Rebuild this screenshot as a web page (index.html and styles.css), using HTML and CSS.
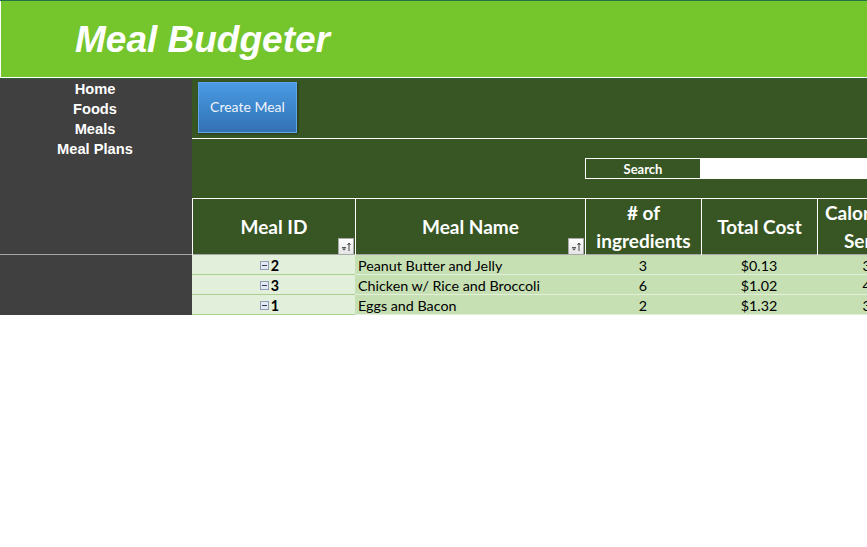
FILE: index.html
```html
<!DOCTYPE html>
<html lang="en">
<head>
<meta charset="utf-8">
<title>Meal Budgeter</title>
<link rel="stylesheet" href="styles.css">
</head>
<body>
<div class="page">
  <header class="header">
    <div class="titlebar"><h1 class="title">Meal Budgeter</h1></div>
  </header>
  <div class="layout">
    <nav class="sidebar">
      <ul class="nav">
        <li>Home</li>
        <li>Foods</li>
        <li>Meals</li>
        <li>Meal Plans</li>
      </ul>
      <div class="sidebar-foot"></div>
    </nav>
    <main class="main">
      <div class="toolbar">
        <button class="btn" type="button">Create Meal</button>
      </div>
      <div class="searchbar">
        <div class="search-label">Search</div>
        <div class="search-input"></div>
      </div>
      <div class="table">
        <div class="thead">
          <div class="th">Meal ID
            <span class="sort"><svg width="16" height="17" viewBox="0 0 16 17"><defs><linearGradient id="sg1" x1="0" y1="0" x2="0" y2="1"><stop offset="0" stop-color="#ffffff"/><stop offset="1" stop-color="#e4e4e4"/></linearGradient></defs><rect x="0.5" y="0.5" width="15" height="16" fill="url(#sg1)" stroke="#a9a9a9"/><rect x="4" y="9" width="4" height="1" fill="#555"/><path d="M4 10.5h4l-2 2z" fill="#444"/><path d="M11 5v8" stroke="#444" stroke-width="1"/><path d="M9.5 7l1.5-2l1.5 2" fill="none" stroke="#444" stroke-width="1"/></svg></span>
          </div>
          <div class="th">Meal Name
            <span class="sort"><svg width="16" height="17" viewBox="0 0 16 17"><defs><linearGradient id="sg2" x1="0" y1="0" x2="0" y2="1"><stop offset="0" stop-color="#ffffff"/><stop offset="1" stop-color="#e4e4e4"/></linearGradient></defs><rect x="0.5" y="0.5" width="15" height="16" fill="url(#sg2)" stroke="#a9a9a9"/><rect x="4" y="9" width="4" height="1" fill="#555"/><path d="M4 10.5h4l-2 2z" fill="#444"/><path d="M11 5v8" stroke="#444" stroke-width="1"/><path d="M9.5 7l1.5-2l1.5 2" fill="none" stroke="#444" stroke-width="1"/></svg></span>
          </div>
          <div class="th">#&nbsp;of<br>ingredients</div>
          <div class="th">Total Cost</div>
          <div class="th">Calories per<br>Serving</div>
        </div>

        <div class="tr">
          <div class="td id"><span class="toggle"><svg width="9" height="9" viewBox="0 0 9 9"><rect x="0.5" y="0.5" width="8" height="8" fill="#e3e8f1" stroke="#8f9bb7"/><path d="M2 4.5h5" stroke="#2e3b5c"/></svg></span>2</div>
          <div class="td name">Peanut Butter and Jelly</div>
          <div class="td num">3</div>
          <div class="td num">$0.13</div>
          <div class="td num">350</div>
        </div>
        <div class="tr">
          <div class="td id"><span class="toggle"><svg width="9" height="9" viewBox="0 0 9 9"><rect x="0.5" y="0.5" width="8" height="8" fill="#e3e8f1" stroke="#8f9bb7"/><path d="M2 4.5h5" stroke="#2e3b5c"/></svg></span>3</div>
          <div class="td name">Chicken w/ Rice and Broccoli</div>
          <div class="td num">6</div>
          <div class="td num">$1.02</div>
          <div class="td num">480</div>
        </div>
        <div class="tr">
          <div class="td id"><span class="toggle"><svg width="9" height="9" viewBox="0 0 9 9"><rect x="0.5" y="0.5" width="8" height="8" fill="#e3e8f1" stroke="#8f9bb7"/><path d="M2 4.5h5" stroke="#2e3b5c"/></svg></span>1</div>
          <div class="td name">Eggs and Bacon</div>
          <div class="td num">2</div>
          <div class="td num">$1.32</div>
          <div class="td num">320</div>
        </div>
      </div>
    </main>
  </div>
</div>
</body>
</html>
```

FILE: styles.css
```css
* { box-sizing: border-box; }

html, body {
  margin: 0;
  padding: 0;
  background: #ffffff;
}

.page {
  width: 867px;
  overflow: hidden;
}

.header {
  border-top: 1px solid #217346;
  border-bottom: 1px solid #2d5c36;
}

.titlebar {
  height: 77px;
  background: #75c52c;
  border-left: 1px solid #ffffff;
  border-bottom: 1px solid #ffffff;
  display: flex;
  align-items: center;
  padding-left: 74px;
}

.title {
  margin: 0;
  font-family: "Liberation Sans", Arial, sans-serif;
  font-weight: bold;
  font-style: italic;
  font-size: 37px;
  color: #ffffff;
  line-height: 1;
  padding-top: 1px;
}

.layout {
  display: grid;
  grid-template-columns: 192px 1fr;
}

.sidebar {
  background: #404040;
  display: flex;
  flex-direction: column;
}

.nav {
  list-style: none;
  margin: 0;
  padding: 0;
  height: 176px;
  border-bottom: 1px solid #a6a6a6;
}

.nav li {
  font-family: "Liberation Sans", Arial, sans-serif;
  font-weight: bold;
  font-size: 14.67px;
  line-height: 20px;
  color: #ffffff;
  text-align: center;
  padding-right: 2px;
}

.sidebar-foot {
  flex: 1;
}

.main {
  background: #375623;
  overflow: hidden;
}

.toolbar {
  height: 60px;
  padding: 3px 0 0 6px;
  border-bottom: 1px solid #ffffff;
}

.btn {
  width: 99px;
  height: 51px;
  border: 1px solid #5fa6ea;
  background: linear-gradient(#4b9be4, #3a82c8 60%, #3470b2);
  color: #eef4fb;
  font-family: Lato, "Open Sans", sans-serif;
  font-size: 14px;
  padding: 0 0 2px;
  box-shadow: 1px 1px 2px rgba(0, 0, 0, 0.35);
}

.searchbar {
  height: 59px;
  padding: 19px 0 0 393px;
  display: flex;
  align-items: flex-start;
}

.search-label {
  width: 116px;
  height: 21px;
  border: 1px solid #ffffff;
  color: #ffffff;
  font-family: Lato, "Open Sans", sans-serif;
  font-weight: bold;
  font-size: 13px;
  line-height: 20px;
  text-align: center;
  flex: none;
}

.search-input {
  width: 170px;
  height: 21px;
  background: #ffffff;
  flex: none;
}

.table {
  border-top: 1px solid #ffffff;
  width: 741px;
}

.thead,
.tr {
  display: grid;
  grid-template-columns: 163px 230px 116px 116px 116px;
}

.thead {
  height: 56px;
  border-bottom: 1px solid #a6a6a6;
}

.th {
  position: relative;
  border-left: 1px solid #ffffff;
  color: #ffffff;
  font-family: Lato, "Open Sans", sans-serif;
  font-weight: bold;
  font-size: 19px;
  line-height: 28px;
  text-align: center;
  display: flex;
  align-items: center;
  justify-content: center;
  white-space: nowrap;
}

.sort {
  position: absolute;
  right: 1px;
  bottom: 0;
  width: 16px;
  height: 17px;
  line-height: 0;
}

.tr {
  height: 20px;
}

.td {
  height: 20px;
  padding-top: 1px;
  font-family: Lato, "Open Sans", sans-serif;
  font-size: 14.3px;
  color: #000000;
  display: flex;
  align-items: center;
  white-space: nowrap;
  background: #c6e0b4;
  border-bottom: 1px solid #e2efda;
}

.td.id {
  background: #e2efda;
  border-bottom: 1px solid #a9d08e;
  justify-content: center;
  font-weight: bold;
  padding-right: 8px;
  gap: 2px;
}

.toggle {
  width: 9px;
  height: 9px;
  line-height: 0;
  display: inline-block;
}

.td.name {
  padding-left: 3px;
}

.td.num {
  justify-content: center;
}
```
